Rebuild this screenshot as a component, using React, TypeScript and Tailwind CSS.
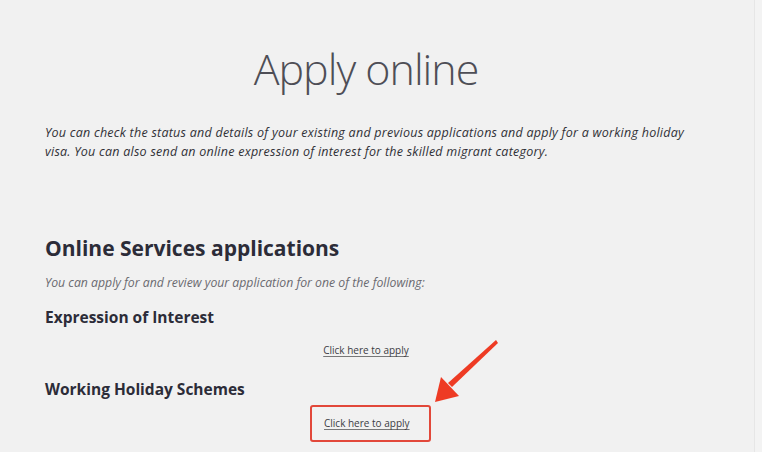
const font = { fontFamily: '"Open Sans", "Liberation Sans", sans-serif' };

function Arrow() {
  return (
    <svg
      className="absolute left-[425px] top-[330px]"
      width="85"
      height="85"
      viewBox="425 330 85 85"
    >
      <path d="M496 340 L498 343 L452 387 L448 383 Z" fill="#ee3b24" />
      <path d="M435 402 L441 377 L459 396 Z" fill="#ee3b24" />
    </svg>
  );
}

export default function App() {
  return (
    <div
      className="relative w-[762px] h-[452px] overflow-hidden bg-[#f1f1f1]"
      style={font}
    >
      <div className="absolute right-0 top-0 h-full w-[8px] border-l border-[#e6e6e6] bg-[#f3f3f3]" />
      <div className="ml-[45px] w-[642px]">
        <h1 className="pt-[46px] text-center text-[43px] leading-[46px] tracking-[-1px] font-light text-[#4e4e56]">
          Apply online
        </h1>
        <p className="mt-[31px] italic text-[12.5px] leading-[19px] tracking-[0.25px] text-[#303036]">
          You can check the status and details of your existing and previous applications and apply for a working holiday visa. You can also send an online expression of interest for the skilled migrant category.
        </p>
        <h2 className="mt-[75px] text-[21px] leading-[24px] font-bold text-[#2c2c38]">
          Online Services applications
        </h2>
        <p className="mt-[15px] italic text-[12.25px] leading-[16px] text-[#6a6a70]">
          You can apply for and review your application for one of the following:
        </p>
        <h3 className="mt-[16px] text-[15.5px] leading-[20px] font-bold text-[#2c2c38]">
          Expression of Interest
        </h3>
        <div className="mt-[16px] flex justify-center">
          <a className="text-[10px] leading-[14px] text-[#3c3c44] underline underline-offset-2 decoration-[#777]">
            Click here to apply
          </a>
        </div>
        <h3 className="mt-[22px] text-[15.5px] leading-[20px] font-bold text-[#2c2c38]">
          Working Holiday Schemes
        </h3>
        <div className="mt-[6px] ml-[265px] w-[121px] h-[37px] border-2 border-[#e2483a] rounded-[3px] pl-[12px] pt-[2px]">
          <a className="text-[10px] leading-[14px] text-[#3c3c44] underline underline-offset-2 decoration-[#777]">
            Click here to apply
          </a>
        </div>
      </div>
      <Arrow />
    </div>
  );
}
